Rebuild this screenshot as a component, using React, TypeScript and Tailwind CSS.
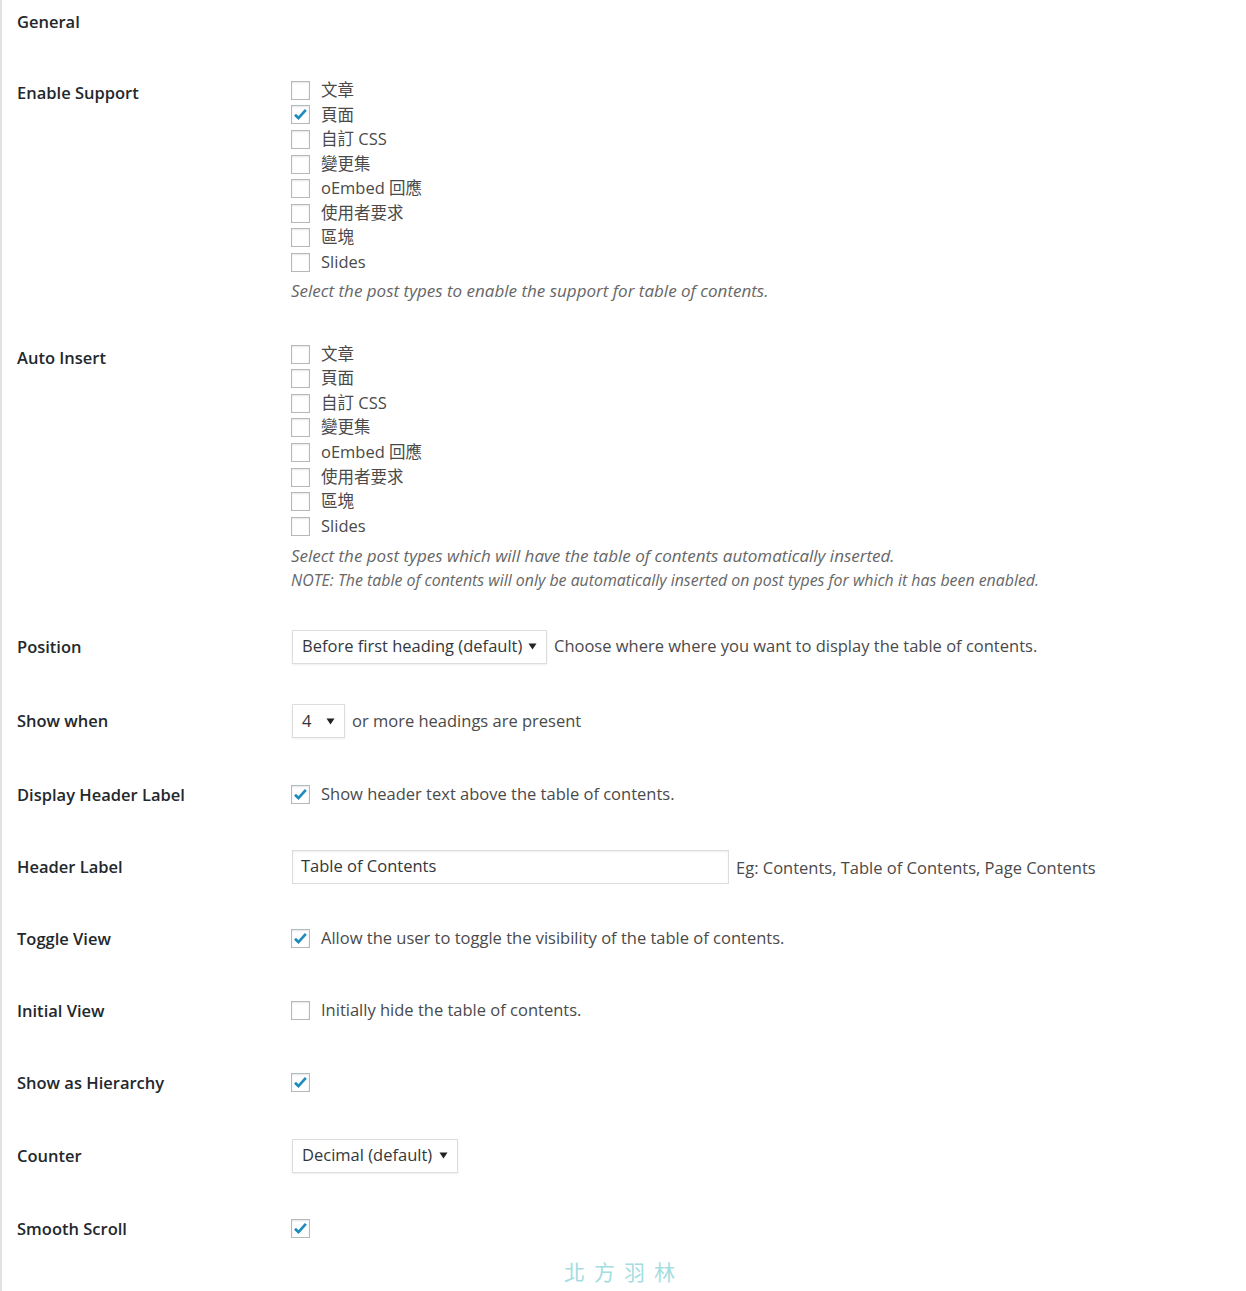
import React from "react";

const FONT = '"Open Sans", "Noto Sans CJK TC", "Noto Sans", sans-serif';

function Box({ checked }: { checked?: boolean }) {
  return (
    <span className="inline-flex shrink-0 items-center justify-center w-[19px] h-[19px] border border-[#b4b9be] bg-white shadow-[inset_0_1px_2px_rgba(0,0,0,0.1)]">
      {checked && (
        <svg width="17" height="17" viewBox="0 0 20 20">
          <path d="M3.5 10.2 L7.6 14.2 L16.3 4.6" fill="none" stroke="#1e8cbe" strokeWidth="3.2" strokeLinecap="butt" strokeLinejoin="miter" />
        </svg>
      )}
    </span>
  );
}

function Check({ label, checked }: { label?: string; checked?: boolean }) {
  return (
    <div className="flex items-center h-[24.6px] gap-[11px]">
      <Box checked={checked} />
      {label && <span className="text-[16.5px] text-[#4a4a4a]">{label}</span>}
    </div>
  );
}

function Arrow() {
  return (
    <svg width="9" height="7" viewBox="0 0 9 7" className="shrink-0">
      <path d="M0.5 0.5 H8.5 L4.5 6.5 Z" fill="#222" />
    </svg>
  );
}

function Select({ value, width }: { value: string; width: string }) {
  return (
    <span className={`inline-flex items-center justify-between h-[34px] pl-[9px] pr-[9px] border border-[#ddd] bg-white shadow-[0_1px_2px_rgba(0,0,0,0.07)] text-[16.5px] text-[#32373c] ${width}`}>
      <span>{value}</span>
      <Arrow />
    </span>
  );
}

const POST_TYPES = ["文章", "頁面", "自訂 CSS", "變更集", "oEmbed 回應", "使用者要求", "區塊", "Slides"];

function Label({ children }: { children: React.ReactNode }) {
  return <div className="w-[289px] shrink-0 pl-[15px] text-[16.5px] font-semibold text-[#23282d] leading-[22px]">{children}</div>;
}

function SimpleRow({ label, children, h = "h-[72px]" }: { label: string; children: React.ReactNode; h?: string }) {
  return (
    <div className={`flex items-center ${h}`}>
      <Label>{label}</Label>
      <div className="flex items-center">{children}</div>
    </div>
  );
}

export default function App() {
  return (
    <div className="min-h-[1291px] w-[1246px] bg-white border-l-2 border-[#e2e2e2]" style={{ fontFamily: FONT }}>
      <div className="pt-[11px] pl-[15px] text-[16.5px] font-semibold text-[#23282d] leading-[22px] h-[57px]">General</div>

      <div className="flex items-start pb-[20px]">
        <div className="pt-[25px]">
          <Label>Enable Support</Label>
        </div>
        <div className="pt-[21px]">
          {POST_TYPES.map((t, i) => (
            <Check key={t} label={t} checked={i === 1} />
          ))}
          <div className="mt-[5px] text-[17px] italic text-[#666] leading-[22px]">Select the post types to enable the support for table of contents.</div>
        </div>
      </div>

      <div className="flex items-start pb-[21px]">
        <div className="pt-[25px]">
          <Label>Auto Insert</Label>
        </div>
        <div className="pt-[20px]">
          {POST_TYPES.map((t) => (
            <Check key={t} label={t} />
          ))}
          <div className="mt-[6px] text-[17px] italic text-[#666] leading-[22px]">Select the post types which will have the table of contents automatically inserted.</div>
          <div className="mt-[4px] text-[15.9px] italic text-[#666] leading-[18px]">NOTE: The table of contents will only be automatically inserted on post types for which it has been enabled.</div>
        </div>
      </div>

      <SimpleRow label="Position" h="h-[74px]">
        <span className="ml-[1px]"><Select value="Before first heading (default)" width="w-[255px]" /></span>
        <span className="ml-[7px] text-[16.5px] text-[#4a4a4a]">Choose where where you want to display the table of contents.</span>
      </SimpleRow>

      <SimpleRow label="Show when" h="h-[75px]">
        <span className="ml-[1px]"><Select value="4" width="w-[53px]" /></span>
        <span className="ml-[7px] text-[16.5px] text-[#4a4a4a]">or more headings are present</span>
      </SimpleRow>

      <SimpleRow label="Display Header Label">
        <Check label="Show header text above the table of contents." checked />
      </SimpleRow>

      <SimpleRow label="Header Label">
        <span className="ml-[1px] inline-flex items-center h-[34px] w-[437px] px-[8px] border border-[#ddd] bg-white shadow-[inset_0_1px_2px_rgba(0,0,0,0.07)] text-[16.5px] text-[#32373c]">Table of Contents</span>
        <span className="ml-[7px] mt-[4px] text-[16.5px] text-[#4a4a4a]">Eg: Contents, Table of Contents, Page Contents</span>
      </SimpleRow>

      <SimpleRow label="Toggle View">
        <Check label="Allow the user to toggle the visibility of the table of contents." checked />
      </SimpleRow>

      <SimpleRow label="Initial View">
        <Check label="Initially hide the table of contents." />
      </SimpleRow>

      <SimpleRow label="Show as Hierarchy">
        <Check checked />
      </SimpleRow>

      <SimpleRow label="Counter" h="h-[74px]">
        <span className="ml-[1px]"><Select value="Decimal (default)" width="w-[166px]" /></span>
      </SimpleRow>

      <SimpleRow label="Smooth Scroll">
        <Check checked />
      </SimpleRow>

      <div className="flex justify-center -mt-[8px]">
        <span className="text-[21px] tracking-[9px] text-[#a3dde2] leading-[28px]" style={{ fontFamily: '"Noto Sans CJK TC", sans-serif' }}>北方羽林</span>
      </div>
    </div>
  );
}
